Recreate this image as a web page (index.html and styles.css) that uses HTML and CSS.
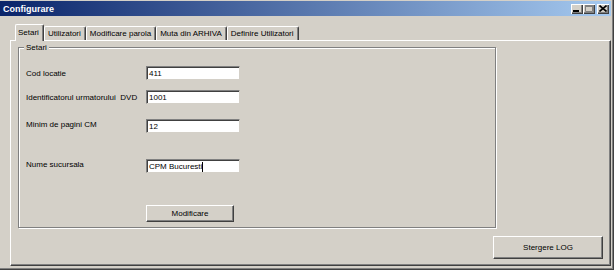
FILE: index.html
```html
<!DOCTYPE html>
<html>
<head>
  <meta charset="UTF-8">
  <title>Configurare</title>
  <link rel="stylesheet" href="styles.css">
</head>
<body>
  <div class="window">
    <div class="titlebar">
      <span class="title">Configurare</span>
      <div class="title-buttons">
        <span class="tbtn">
          <svg width="6" height="2" viewBox="0 0 6 2"><rect x="0" y="0" width="6" height="2" fill="#000"/></svg>
        </span>
        <span class="tbtn tbtn-disabled">
          <svg width="8" height="7" viewBox="0 0 8 7"><path d="M0.5 1.5h7v5h-7z" fill="none" stroke="#808080"/><rect x="0" y="0" width="8" height="2" fill="#808080"/></svg>
        </span>
        <span class="tbtn tbtn-close">
          <svg width="8" height="7" viewBox="0 0 8 7"><path d="M0.5 0.5l7 6M7.5 0.5l-7 6" stroke="#000" stroke-width="1.6"/></svg>
        </span>
      </div>
    </div>

    <div class="content">
      <div class="tabs">
        <div class="tab active">Setari</div>
        <div class="tab">Utilizatori</div>
        <div class="tab">Modificare parola</div>
        <div class="tab">Muta din ARHIVA</div>
        <div class="tab">Definire Utilizatori</div>
      </div>

      <div class="panel">
        <div class="groupbox">
          <span class="legend">Setari</span>

          <div class="row">
            <span class="label">Cod locatie</span>
            <div class="field">411</div>
          </div>
          <div class="row row-2">
            <span class="label">Identificatorul urmatorului&nbsp; DVD</span>
            <div class="field">1001</div>
          </div>
          <div class="row row-3">
            <span class="label label-up">Minim de pagini CM</span>
            <div class="field">12</div>
          </div>
          <div class="row row-4">
            <span class="label label-up">Nume sucursala</span>
            <div class="field">CPM Bucuresti<span class="caret"></span></div>
          </div>
          <div class="row row-btn">
            <button type="button" class="btn btn-modify">Modificare</button>
          </div>
        </div>

        <div class="panel-footer">
          <button type="button" class="btn btn-log">Stergere LOG</button>
        </div>
      </div>
    </div>
  </div>
</body>
</html>
```

FILE: styles.css
```css
* {
  box-sizing: border-box;
}
body {
  margin: 0;
  background-color: #d4d0c8;
  font-family: "Liberation Sans", Arial, sans-serif;
  font-size: 8px;
  color: #000;
}
.window {
  width: 614px;
  height: 270px;
  display: flex;
  flex-direction: column;
  padding: 1px 3px 3px 0;
  background-color: #d4d0c8;
  box-shadow: inset -1px -1px 0 #404040, inset -2px -2px 0 #808080;
}

/* title bar */
.titlebar {
  height: 15px;
  display: flex;
  align-items: center;
  justify-content: space-between;
  padding: 0 2px 0 3px;
  background: linear-gradient(to right, #0a246a, #a6caf0);
}
.title {
  color: #fff;
  font-weight: bold;
  font-size: 9px;
}
.title-buttons {
  display: flex;
}
.tbtn {
  width: 12px;
  height: 10px;
  display: flex;
  align-items: center;
  justify-content: center;
  background-color: #d4d0c8;
  box-shadow: inset 1px 1px 0 #fff, inset -1px -1px 0 #404040, inset -2px -2px 0 #808080;
}
.tbtn svg {
  display: block;
}
.tbtn:first-child svg {
  margin: 4px 3px 0 0;
}
.tbtn-close {
  margin-left: 2px;
}

/* tabs */
.content {
  flex: 1;
  display: flex;
  flex-direction: column;
  padding: 8px 0 1px 10px;
}
.tabs {
  display: flex;
  align-items: flex-end;
  height: 16px;
  padding-left: 5px;
  position: relative;
  z-index: 1;
}
.tab {
  height: 14px;
  padding: 2px 4px 0 3px;
  white-space: nowrap;
  background-color: #d4d0c8;
  border-left: 1px solid #fff;
  border-top: 1px solid #fff;
  border-right: 1px solid #404040;
  box-shadow: inset -1px 0 0 #808080;
  border-radius: 2px 2px 0 0;
}
.tab.active {
  height: 17px;
  margin-bottom: -1px;
  padding-top: 3px;
  padding-left: 2px;
}

/* tab page */
.panel {
  flex: 1;
  display: flex;
  flex-direction: column;
  padding: 6px 7px 6px 7px;
  border-left: 1px solid #fff;
  border-top: 1px solid #fff;
  border-right: 1px solid #404040;
  border-bottom: 1px solid #404040;
  box-shadow: inset -1px -1px 0 #808080;
}
.groupbox {
  position: relative;
  width: 478px;
  height: 181px;
  padding: 18px 0 0 7px;
  border: 1px solid #808080;
  box-shadow: 1px 1px 0 #fff, inset 1px 1px 0 #fff;
}
.legend {
  position: absolute;
  top: -5px;
  left: 5px;
  padding: 0 2px;
  background-color: #d4d0c8;
}
.row {
  display: flex;
  align-items: center;
}
.row-2 {
  margin-top: 10px;
}
.row-3 {
  margin-top: 15px;
}
.row-4 {
  margin-top: 26px;
}
.row-btn {
  margin-top: 32px;
  padding-left: 120px;
}
.label {
  width: 120px;
  white-space: nowrap;
}
.label-up {
  align-self: flex-start;
  padding-top: 1px;
}
.field {
  width: 94px;
  height: 14px;
  display: flex;
  align-items: center;
  padding: 1px 0 0 2px;
  background-color: #fff;
  border-top: 1px solid #808080;
  border-left: 1px solid #808080;
  border-right: 1px solid #d4d0c8;
  border-bottom: 1px solid #d4d0c8;
  box-shadow: inset 1px 1px 0 #404040;
  white-space: nowrap;
}
.caret {
  display: inline-block;
  width: 1px;
  height: 10px;
  background-color: #000;
}

/* buttons */
.btn {
  font-family: inherit;
  font-size: 8px;
  color: #000;
  padding: 0;
  background-color: #d4d0c8;
  border: 1px solid;
  border-color: #fff #404040 #404040 #fff;
  box-shadow: inset -1px -1px 0 #808080;
}
.btn-modify {
  width: 88px;
  height: 17px;
}
.panel-footer {
  margin-top: auto;
  display: flex;
  justify-content: flex-end;
}
.btn-log {
  width: 110px;
  height: 23px;
}
```
